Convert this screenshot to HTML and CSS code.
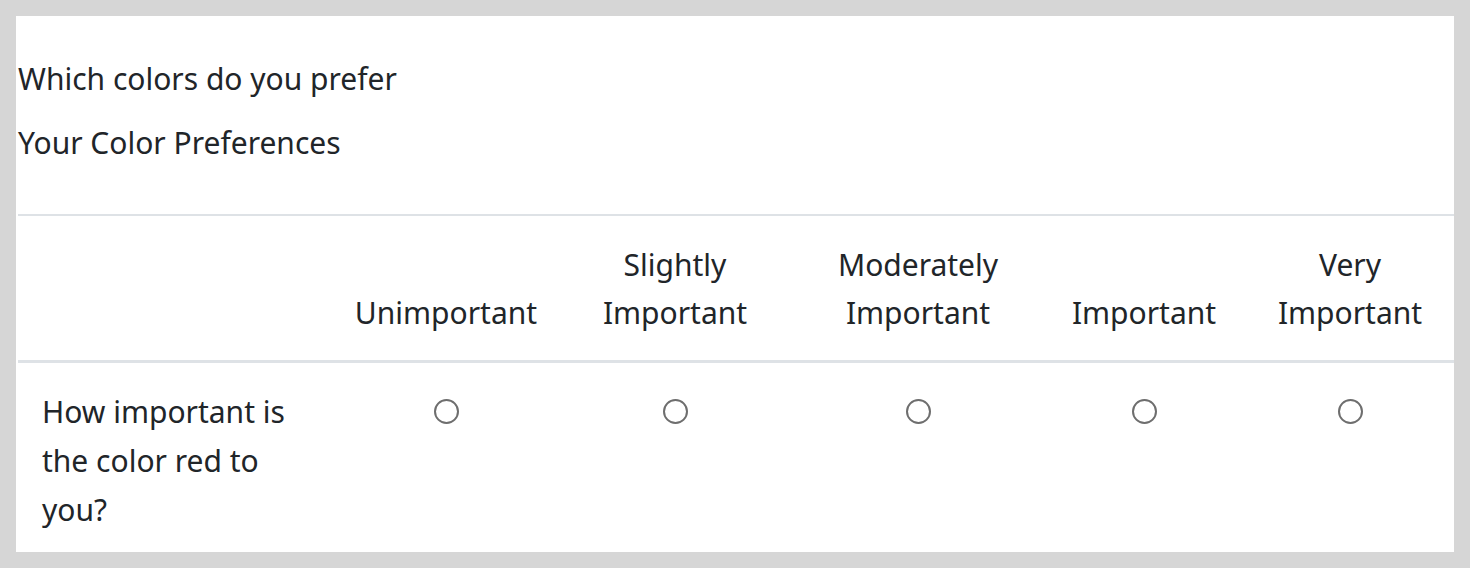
FILE: index.html
```html
<!DOCTYPE html>
<html lang="en">
<head>
<meta charset="utf-8">
<title>Color Preferences</title>
<link rel="stylesheet" href="styles.css">
</head>
<body>
<div class="card">
  <div class="heading">
    <p class="title">Which colors do you prefer</p>
    <p class="title">Your Color Preferences</p>
  </div>
  <table class="matrix">
    <colgroup>
      <col class="c-q">
      <col class="c-1">
      <col class="c-2">
      <col class="c-3">
      <col class="c-4">
      <col class="c-5">
    </colgroup>
    <thead>
      <tr>
        <th></th>
        <th>Unimportant</th>
        <th>Slightly Important</th>
        <th>Moderately Important</th>
        <th>Important</th>
        <th>Very Important</th>
      </tr>
    </thead>
    <tbody>
      <tr>
        <td class="question">How important is the color red to you?</td>
        <td class="choice"><span class="radio"></span></td>
        <td class="choice"><span class="radio"></span></td>
        <td class="choice"><span class="radio"></span></td>
        <td class="choice"><span class="radio"></span></td>
        <td class="choice"><span class="radio"></span></td>
      </tr>
    </tbody>
  </table>
</div>
</body>
</html>
```
FILE: styles.css
```css
html, body {
  margin: 0;
  padding: 0;
}
body {
  background: #d6d6d6;
  padding: 16px;
  height: 568px;
  box-sizing: border-box;
  overflow: hidden;
  font-family: "Noto Sans", "Open Sans", sans-serif;
  font-size: 30px;
  color: #212529;
}
.card {
  background: #ffffff;
  height: 536px;
  padding: 0 0 0 2px;
  box-sizing: border-box;
  overflow: hidden;
}
.heading {
  padding: 39px 0 47px 0;
  display: flex;
  flex-direction: column;
  gap: 16px;
}
.title {
  margin: 0;
  line-height: 48px;
}
.matrix {
  width: 1436px;
  border-collapse: collapse;
  table-layout: fixed;
}
.c-q { width: 318px; }
.c-1 { width: 220px; }
.c-2 { width: 238px; }
.c-3 { width: 248px; }
.c-4 { width: 204px; }
.c-5 { width: 208px; }
.matrix th {
  font-weight: 400;
  text-align: center;
  vertical-align: bottom;
  line-height: 48px;
  padding: 25px 4px 23px 4px;
  border-top: 2px solid #dee2e6;
  border-bottom: 3px solid #dee2e6;
}
.matrix td {
  vertical-align: top;
  line-height: 49px;
  padding: 24px 25px 18px 24px;
}
.matrix td.choice {
  text-align: center;
  padding-left: 0;
  padding-right: 0;
}
.radio {
  display: inline-block;
  width: 25px;
  height: 25px;
  box-sizing: border-box;
  border: 2px solid #6e6e6e;
  border-radius: 50%;
  vertical-align: middle;
  position: relative;
  top: -3px;
}
```
